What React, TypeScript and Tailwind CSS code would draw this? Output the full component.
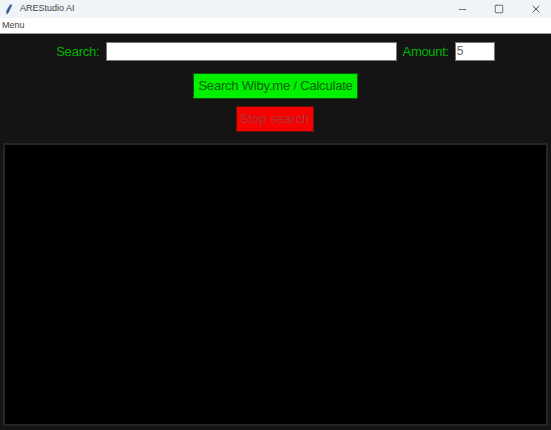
import React from 'react';
import { Minus, Square, X } from 'lucide-react';

const App: React.FC = () => {
  return (
    <div className="w-[551px] h-[430px] flex flex-col overflow-hidden bg-[#141414] font-['Liberation_Sans',Arial,sans-serif]">
      {/* title bar */}
      <div className="h-[18px] shrink-0 bg-[#eff4f9] flex items-center">
        <svg width="8" height="13" viewBox="0 0 10 14" className="ml-[5px]">
          <path d="M6.5 0.5 L9 1.5 L5 10 L2 13.5 L1.5 9 Z" fill="#3b5f96" />
        </svg>
        <span className="ml-[7px] text-[9px] text-[#444]">AREStudio AI</span>
        <div className="ml-auto flex items-center">
          <Minus size={11} strokeWidth={2} className="text-[#666] mr-[26px]" />
          <Square size={10} strokeWidth={2} className="text-[#555] mr-[26px]" />
          <X size={12} strokeWidth={2} className="text-[#555] mr-[9px]" />
        </div>
      </div>
      {/* menu */}
      <div className="h-[16px] shrink-0 bg-white border-b border-[#9a9a9a] flex items-center pl-[2px] text-[9px] text-[#444]">Menu</div>

      <div className="flex-1 flex flex-col items-center">
        <div className="mt-[8px] flex items-center text-[13px] leading-none text-[#00b400]">
          <span className="tracking-[-0.2px]">Search:</span>
          <div className="ml-[6px] w-[291px] h-[19px] bg-white border border-[#777]" />
          <span className="ml-[6px] tracking-[-0.3px]">Amount:</span>
          <div className="ml-[6px] w-[40px] h-[19px] bg-white border border-[#777] pl-[1px] text-[12px] leading-[17px] text-[#666]">5</div>
        </div>
        <button className="mt-[12px] w-[165px] h-[26px] whitespace-nowrap bg-[#00f000] border border-[#0a5a0a] text-[13px] tracking-[-0.2px] text-[#0a5f0a]">Search Wiby.me / Calculate</button>
        <button className="mt-[7px] mr-[2px] w-[78px] h-[26px] whitespace-nowrap bg-[#f60000] border border-[#6a1010] text-[13px] text-[#a83a3a]">Stop search</button>
        <div className="mt-[11px] w-[545px] flex-1 mb-[4px] bg-black border-2 border-[#262626]" />
      </div>
    </div>
  );
};

export default App;
